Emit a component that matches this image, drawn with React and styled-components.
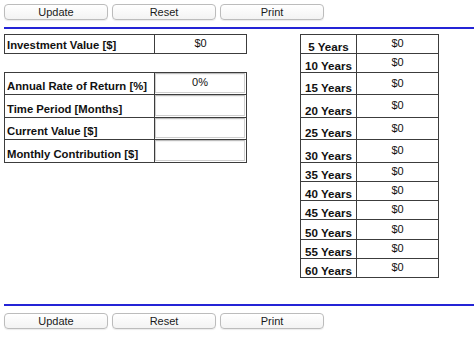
import React from "react";
import styled, { createGlobalStyle } from "styled-components";

const GlobalStyle = createGlobalStyle`
  body {
    margin: 0;
    background: #ffffff;
    font-family: "Liberation Sans", Arial, Helvetica, sans-serif;
    color: #111;
  }
`;

const Page = styled.div`
  width: 474px;
  height: 348px;
  padding: 4px 0 0 4px;
  box-sizing: border-box;
  overflow: hidden;
`;

const ButtonBar = styled.div`
  display: flex;
  gap: 4px;
  height: 16px;
  margin: ${(p) => (p.$bottom ? "7px 0 0" : "0 0 7px")};
`;

const Button = styled.button`
  width: 104px;
  height: 16px;
  padding: 0;
  border: 1px solid #bcbcbc;
  border-radius: 4px;
  background: linear-gradient(#ffffff, #f3f3f3);
  box-shadow: 0 1px 1px rgba(0, 0, 0, 0.08);
  font-family: "Liberation Sans", Arial, sans-serif;
  font-size: 11px;
  color: #1a1a1a;
  line-height: 14px;
  cursor: pointer;
`;

const Rule = styled.div`
  height: 2px;
  background: #2424d6;
  margin: ${(p) => (p.$bottom ? "26px 0 0" : "0 0 5px")};
`;

const Main = styled.div`
  display: flex;
  align-items: flex-start;
  gap: 53px;
`;

const LeftColumn = styled.div`
  display: flex;
  flex-direction: column;
`;

const Spacer = styled.div`
  height: 18px;
`;

const Table = styled.div`
  display: grid;
  grid-template-columns: ${(p) => p.$cols};
  grid-template-rows: ${(p) => p.$rows};
  border-top: 1px solid #3c3c3c;
  border-left: 1px solid #3c3c3c;
`;

const Cell = styled.div`
  box-sizing: border-box;
  border-right: 1px solid #3c3c3c;
  border-bottom: 1px solid #3c3c3c;
  display: flex;
  font-size: 11px;
  line-height: 13px;
  ${(p) =>
    p.$kind === "label" &&
    `
    font-weight: bold;
    font-size: 11.3px;
    align-items: flex-end;
    padding: 0 0 1px 2px;
    white-space: nowrap;
  `}
  ${(p) =>
    p.$kind === "year" &&
    `
    font-weight: bold;
    font-size: 11.6px;
    align-items: flex-end;
    justify-content: center;
    padding-bottom: 0;
  `}
  ${(p) =>
    p.$kind === "value" &&
    `
    align-items: center;
    justify-content: center;
    padding-bottom: 1px;
  `}
  ${(p) =>
    p.$kind === "input" &&
    `
    align-items: stretch;
    padding: 0 1px 1px 0;
  `}
`;

const ValueInput = styled.input`
  box-sizing: border-box;
  width: 100%;
  height: 100%;
  margin: 0;
  border: 1px solid #cfcfcf;
  border-top-color: #bdbdbd;
  box-shadow: inset 0 1px 1px rgba(0, 0, 0, 0.06);
  background: #fff;
  font-family: "Liberation Sans", Arial, sans-serif;
  font-size: 11px;
  color: #111;
  text-align: center;
  padding: 0 0 2px;
  outline: none;
`;

const inputs = [
  { label: "Annual Rate of Return [%]", value: "0%" },
  { label: "Time Period [Months]", value: "" },
  { label: "Current Value [$]", value: "" },
  { label: "Monthly Contribution [$]", value: "" },
];

const years = [5, 10, 15, 20, 25, 30, 35, 40, 45, 50, 55, 60];

function Buttons({ bottom }) {
  return (
    <ButtonBar $bottom={bottom}>
      <Button>Update</Button>
      <Button>Reset</Button>
      <Button>Print</Button>
    </ButtonBar>
  );
}

export default function App() {
  return (
    <Page>
      <GlobalStyle />
      <Buttons />
      <Rule />
      <Main>
        <LeftColumn>
          <Table $cols="150px 92px" $rows="19px">
            <Cell $kind="label">Investment Value [$]</Cell>
            <Cell $kind="value">$0</Cell>
          </Table>
          <Spacer />
          <Table $cols="150px 92px" $rows="22px 23px 22px 23px">
            {inputs.map((row) => (
              <React.Fragment key={row.label}>
                <Cell $kind="label">{row.label}</Cell>
                <Cell $kind="input">
                  <ValueInput defaultValue={row.value} />
                </Cell>
              </React.Fragment>
            ))}
          </Table>
        </LeftColumn>
        <Table
          $cols="56px 82px"
          $rows="19px 19px 22px 23px 22px 23px 19px 19px 19px 20px 19px 19px"
        >
          {years.map((y) => (
            <React.Fragment key={y}>
              <Cell $kind="year">{y} Years</Cell>
              <Cell $kind="value">$0</Cell>
            </React.Fragment>
          ))}
        </Table>
      </Main>
      <Rule $bottom />
      <Buttons bottom />
    </Page>
  );
}
